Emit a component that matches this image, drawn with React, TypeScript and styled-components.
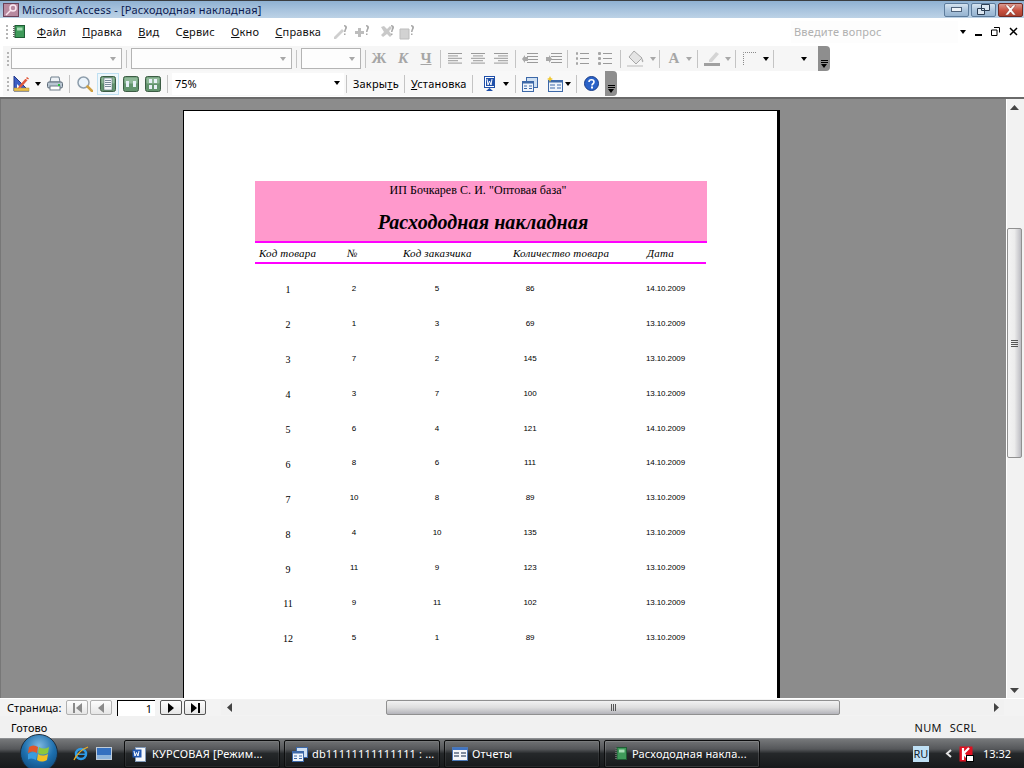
import React from 'react'
import styled, { createGlobalStyle } from 'styled-components';

const GlobalStyle = createGlobalStyle`
  html, body { margin: 0; padding: 0; background: #fff; }
  body { font-family: "Noto Sans", "Liberation Sans", sans-serif; font-size: 11px; color: #000; }
`;

const Screen = styled.div`
  width: 1024px;
  height: 768px;
  overflow: hidden;
  display: flex;
  flex-direction: column;
  background: #fff;
`;

const TitleBar = styled.div`
  height: 18px;
  flex: none;
  display: flex;
  align-items: center;
  padding-left: 3px;
  border-top: 1px solid #3a3d40;
  box-sizing: border-box;
  background: linear-gradient(to bottom, #8fb1d2 0%, #a9c4de 55%, #bcd2e6 100%);
`;

const TitleText = styled.span`
  margin-left: 3px;
  color: #0b1a50;
  font-size: 11px;
  letter-spacing: 0.2px;
  white-space: nowrap;
`;

const WindowButtons = styled.div`
  margin-left: auto;
  margin-right: 1px;
  display: flex;
  gap: 2px;
  height: 14px;
`;

const WindowButton = styled.div<{ $close?: boolean }>`
  width: 25px;
  display: flex;
  align-items: center;
  justify-content: center;
  border: 1px solid ${p => (p.$close ? '#6e2a24' : '#5d7c9c')};
  border-radius: 2px;
  box-sizing: border-box;
  background: ${p => (p.$close
    ? 'linear-gradient(to bottom, #d99a90, #c8503f 55%, #a8402f)'
    : 'linear-gradient(to bottom, #d5e3f0, #a9c3dc 55%, #97b4d0)')};
`;

const MenuBar = styled.div`
  height: 27px;
  flex: none;
  display: flex;
  align-items: center;
  background: #fff;
  padding-left: 6px;
`;

const Grip = styled.div`
  width: 2px;
  height: 14px;
  flex: none;
  background: repeating-linear-gradient(to bottom, #b5b5b5 0 2px, transparent 2px 4px);
`;

const MenuItem = styled.span<{ $ml: number }>`
  margin-left: ${p => p.$ml}px;
  font-size: 11px;
  letter-spacing: 0.2px;
  white-space: nowrap;
  color: #111;
`;

const HelpBox = styled.div`
  width: 167px;
  height: 22px;
  margin-left: auto;
  box-sizing: border-box;
  padding-left: 3px;
  display: flex;
  align-items: center;
  background: #fdfdfd;
  color: #b0b0b0;
  font-size: 11px;
  letter-spacing: 0.2px;
`;

const MdiButtons = styled.div`
  display: flex;
  align-items: center;
  margin-left: 2px;
  margin-right: 6px;
  gap: 9px;
`;

const Toolbar = styled.div<{ $width: number; $bg: string }>`
  width: ${p => p.$width}px;
  height: 25px;
  flex: none;
  display: flex;
  align-items: center;
  box-sizing: border-box;
  padding-left: 4px;
  background: ${p => p.$bg};
  border-radius: 0 4px 4px 0;
  margin: 1px 0 0 3px;
  position: relative;

  & + & {
    margin-top: 0;
  }
`;

const Sep = styled.div<{ $ml: number }>`
  width: 1px;
  height: 18px;
  flex: none;
  background: #c4c4c4;
  margin-left: ${p => p.$ml}px;
`;

const Slot = styled.div<{ $ml: number; $w: number }>`
  margin-left: ${p => p.$ml}px;
  width: ${p => p.$w}px;
  height: 18px;
  flex: none;
  display: flex;
  align-items: center;
  justify-content: center;
`;

const Combo = styled.div<{ $ml: number; $w: number }>`
  margin-left: ${p => p.$ml}px;
  width: ${p => p.$w}px;
  height: 21px;
  flex: none;
  box-sizing: border-box;
  border: 1px solid #b4b4b4;
  background: #fdfdfd;
  display: flex;
  align-items: center;
  justify-content: flex-end;
  padding-right: 5px;
`;

const ZoomCombo = styled.div`
  margin-left: 4px;
  width: 172px;
  height: 22px;
  flex: none;
  box-sizing: border-box;
  background: #fff;
  display: flex;
  align-items: center;
  justify-content: space-between;
  padding: 0 4px 1px 3px;
  font-size: 11px;
`;

const Caret = styled.span<{ $grey?: boolean; $ml?: number }>`
  display: block;
  flex: none;
  margin-left: ${p => p.$ml ?? 0}px;
  width: 0;
  height: 0;
  border-left: 3.5px solid transparent;
  border-right: 3.5px solid transparent;
  border-top: 4px solid ${p => (p.$grey ? '#a8a8a8' : '#000')};
`;

const FormatLetter = styled.span<{ $italic?: boolean; $under?: boolean }>`
  font-family: "Liberation Serif", serif;
  font-weight: 700;
  font-size: 15px;
  color: #a6a6a6;
  font-style: ${p => (p.$italic ? 'italic' : 'normal')};
  text-decoration: ${p => (p.$under ? 'underline' : 'none')};
`;

const ToolText = styled.span<{ $ml: number }>`
  margin-left: ${p => p.$ml}px;
  font-size: 11px;
  white-space: nowrap;
  letter-spacing: 0.2px;
`;

const ActiveTool = styled.div`
  margin-left: 4px;
  width: 22px;
  height: 22px;
  flex: none;
  box-sizing: border-box;
  border: 1px solid #bfe0f2;
  background: #eef7fc;
  display: flex;
  align-items: center;
  justify-content: center;
`;

const Chevron = styled.div`
  position: absolute;
  right: 0;
  top: 0;
  bottom: 0;
  width: 12px;
  background: #8e8e8e;
  border-radius: 0 4px 4px 0;
  display: flex;
  flex-direction: column;
  align-items: center;
  justify-content: flex-end;
  padding-bottom: 3px;
  box-sizing: border-box;
  gap: 1px;
`;

const ChevronBar = styled.div`
  width: 7px;
  height: 1px;
  background: #000;
`;

const Middle = styled.div`
  height: 601px;
  flex: none;
  display: flex;
  margin-top: 1px;
  border-top: 2px solid #6a6a6a;
  box-sizing: border-box;
`;

const Canvas = styled.div`
  flex: 1;
  overflow: hidden;
  background: #8c8c8c;
  padding: 11px 0 0 182px;
  border-left: 1px solid #777;
`;

const Page = styled.div`
  width: 597px;
  height: 700px;
  box-sizing: border-box;
  background: #fff;
  border-top: 1px solid #000;
  border-left: 1px solid #000;
  border-right: 3px solid #000;
  padding: 70px 0 0 71px;
`;

const Report = styled.div`
  width: 452px;
  font-family: "Liberation Serif", serif;
`;

const ReportHeader = styled.div`
  height: 60px;
  background: #ff99cc;
  border-bottom: 2px solid #ff00ff;
  display: flex;
  flex-direction: column;
  align-items: center;
`;

const Company = styled.div`
  margin-top: 1px;
  margin-right: 6px;
  font-size: 12px;
  line-height: 16px;
  letter-spacing: 0.05px;
`;

const ReportTitle = styled.div`
  margin-top: 12px;
  margin-left: 4px;
  font-size: 20px;
  line-height: 24px;
  font-weight: 700;
  font-style: italic;
  letter-spacing: 0.1px;
`;

const ColumnHeads = styled.div`
  height: 19px;
  border-bottom: 2px solid #ff00ff;
  margin-right: 1px;
  display: grid;
  grid-template-columns: 88px 56px 110px 134px 1fr;
  align-items: center;
  padding-left: 4px;
  font-size: 11px;
  font-style: italic;
  letter-spacing: 0.2px;
`;

const Rows = styled.div`
  padding-top: 7px;
`;

const Row = styled.div`
  height: 34.9px;
  display: grid;
  grid-template-columns: 66px 66px 100px 86px 1fr;
  align-items: center;
  justify-items: center;
  font-family: "Liberation Sans", sans-serif;
  font-size: 8px;
  letter-spacing: -0.1px;
  color: #000;
`;

const RowKey = styled.span`
  font-family: "Liberation Serif", serif;
  font-size: 10px;
  margin-top: 3px;
`;

const RowDate = styled.span`
  justify-self: end;
  padding-right: 22px;
`;

const VScroll = styled.div`
  width: 18px;
  flex: none;
  display: flex;
  flex-direction: column;
  box-sizing: border-box;
  background: #f2f2f2;
  border-left: 1px solid #fff;
  padding-right: 2px;
`;

const ArrowCell = styled.div<{ $vertical?: boolean }>`
  flex: none;
  width: ${p => (p.$vertical ? '100%' : '16px')};
  height: ${p => (p.$vertical ? '16px' : '100%')};
  display: flex;
  align-items: center;
  justify-content: center;
`;

const VTrackSpace = styled.div<{ $h: number }>`
  height: ${p => p.$h}px;
  flex: none;
`;

const VThumb = styled.div`
  height: 230px;
  flex: none;
  box-sizing: border-box;
  border: 1px solid #909090;
  border-radius: 2px;
  background: linear-gradient(to right, #f4f4f4, #ececec 50%, #bcbcc2);
  display: flex;
  flex-direction: column;
  align-items: center;
  justify-content: center;
  gap: 1px;
`;

const GripLineH = styled.div`
  width: 7px;
  height: 1px;
  background: #555;
`;

const GripLineV = styled.div`
  width: 1px;
  height: 7px;
  background: #555;
`;

const NavBar = styled.div`
  height: 18px;
  flex: none;
  display: flex;
  align-items: center;
  background: #f3f3f3;
  border-top: 1px solid #fff;
  box-sizing: border-box;
  padding-left: 7px;
`;

const NavLabel = styled.span`
  font-size: 11px;
  width: 59px;
  flex: none;
`;

const NavButton = styled.div<{ $off?: boolean; $ml: number }>`
  width: 22px;
  height: 15px;
  flex: none;
  margin-left: ${p => p.$ml}px;
  box-sizing: border-box;
  border: 1px solid ${p => (p.$off ? '#b0b0b0' : '#555')};
  border-radius: 2px;
  background: linear-gradient(to bottom, #fdfdfd, #e6e6e6);
  display: flex;
  align-items: center;
  justify-content: center;
  gap: 1px;
`;

const NavTriangle = styled.span<{ $off?: boolean; $left?: boolean }>`
  display: block;
  width: 0;
  height: 0;
  border-top: 5px solid transparent;
  border-bottom: 5px solid transparent;
  ${p => (p.$left ? 'border-right' : 'border-left')}: 6px solid ${p => (p.$off ? '#8a8a8a' : '#000')};
`;

const NavStop = styled.span<{ $off?: boolean }>`
  display: block;
  width: 2px;
  height: 10px;
  background: ${p => (p.$off ? '#8a8a8a' : '#000')};
`;

const PageInput = styled.div`
  width: 38px;
  height: 16px;
  flex: none;
  margin-left: 5px;
  box-sizing: border-box;
  border-top: 1px solid #000;
  border-left: 1px solid #000;
  background: #fff;
  text-align: right;
  padding-right: 3px;
  font-size: 11px;
  line-height: 16px;
`;

const HScroll = styled.div`
  margin-left: 15px;
  width: 783px;
  height: 15px;
  flex: none;
  display: flex;
  background: #f1f1f1;
`;

const HThumb = styled.div`
  width: 454px;
  margin-left: 149px;
  flex: none;
  box-sizing: border-box;
  border: 1px solid #909090;
  border-radius: 2px;
  background: linear-gradient(to bottom, #f2f2f2, #dedede 50%, #b4b4ba);
  display: flex;
  align-items: center;
  justify-content: center;
  gap: 1px;
`;

const HSpace = styled.div`
  flex: 1;
`;

const StatusBar = styled.div`
  height: 22px;
  flex: none;
  display: flex;
  align-items: center;
  background: #f1f1f1;
  padding-left: 11px;
  font-size: 11px;
  letter-spacing: 0.1px;
`;

const StatusFlag = styled.span<{ $ml: number }>`
  margin-left: ${p => p.$ml}px;
  color: #111;
  letter-spacing: 0.3px;
`;

const Taskbar = styled.div`
  height: 30px;
  flex: none;
  display: flex;
  align-items: center;
  border-top: 1px solid #8d8f92;
  box-sizing: border-box;
  background: linear-gradient(to bottom, #76787a 0%, #55575a 35%, #25282a 50%, #17191b 100%);
  color: #fff;
  font-size: 11px;
`;

const Orb = styled.div`
  width: 38px;
  height: 38px;
  flex: none;
  margin-left: 20px;
  margin-top: -2px;
  border-radius: 50%;
  box-sizing: border-box;
  border: 1px solid #1c2c3c;
  background: radial-gradient(circle at 50% 30%, #7fb8e0, #1d6fae 50%, #0b3c68 100%);
  display: flex;
  align-items: center;
  justify-content: center;
`;

const QuickLaunch = styled.div`
  display: flex;
  align-items: center;
  margin-left: 15px;
  gap: 7px;
  width: 51px;
  flex: none;
`;

const TaskButton = styled.div<{ $active?: boolean }>`
  width: 156px;
  height: 28px;
  flex: none;
  margin-right: 4px;
  box-sizing: border-box;
  display: flex;
  align-items: center;
  padding-left: 7px;
  gap: 4px;
  border: 1px solid #0c0d0e;
  border-radius: 2px;
  box-shadow: inset 0 0 0 1px rgba(255, 255, 255, ${p => (p.$active ? 0.14 : 0.07)});
  white-space: nowrap;
  overflow: hidden;
  letter-spacing: 0.15px;
`;

const Tray = styled.div`
  margin-left: auto;
  display: flex;
  align-items: center;
  margin-right: 13px;
`;

const LangBadge = styled.span`
  width: 16px;
  height: 16px;
  margin-right: 16px;
  display: flex;
  align-items: center;
  justify-content: center;
  background: #bfe0f5;
  color: #10202c;
  font-size: 11px;
`;

const TrayIcon = styled.span`
  margin-left: 6px;
  display: block;
`;

const Clock = styled.span`
  margin-left: 9px;
`;

const Svg = ({ w = 16, h = 16, children }: { w?: number; h?: number; children: React.ReactNode }) => (
  <svg width={w} height={h} viewBox={`0 0 ${w} ${h}`} style={{ display: 'block', flex: 'none' }}>{children}</svg>
);

const LinesIcon = ({ mode }: { mode: 'left' | 'center' | 'right' }) => {
  const rows = [14, 10, 14, 10, 14];
  return (
    <Svg w={14} h={12}>
      {rows.map((w, i) => (
        <rect key={i} y={i * 2.4} x={mode === 'left' ? 0 : mode === 'center' ? (14 - w) / 2 : 14 - w} width={w} height={1} fill="#9a9a9a" />
      ))}
    </Svg>
  );
};

const IndentIcon = ({ flip }: { flip?: boolean }) => (
  <Svg w={16} h={12}>
    {[0, 3, 6, 9].map(y => <rect key={y} x={5} y={y} width={11} height={1} fill="#9a9a9a" />)}
    <path d={flip ? 'M0 4h3V2l3 4-3 4V8H0z' : 'M0 6l3-4v2h3v4H3v2z'} fill="#a8a8a8" />
  </Svg>
);

const ListIcon = ({ numbered }: { numbered?: boolean }) => (
  <Svg w={14} h={13}>
    {[1, 6, 11].map(y => (
      <React.Fragment key={y}>
        <rect x={5} y={y} width={9} height={1} fill="#9a9a9a" />
        <rect x={numbered ? 1 : 0} y={y - 1} width={numbered ? 2 : 3} height={3} rx={1} fill="#a6a6a6" />
      </React.Fragment>
    ))}
  </Svg>
);

const GhostIcon = ({ kind }: { kind: number }) => (
  <Svg w={16} h={16}>
    {kind === 0 && <path d="M2 13L10 5l2 2-8 8H2z" fill="#cfcfcf" />}
    {kind === 1 && <path d="M1 7h3V4h3v3h3v3H7v3H4v-3H1z" fill="#bdbdbd" />}
    {kind === 2 && <path d="M2 3l3-1 3 3 3-3 2 2-3 3 3 4-2 2-3-3-4 3-2-2 3-3z" fill="#c9c9c9" />}
    {kind === 3 && <path d="M1 5h9v10H1z" fill="#d2d2d2" stroke="#bdbdbd" />}
    <path d="M12 1c2 0 3 1 3 2.500S13.500 6 13.500 8h-1.500C12 6 13.200 5 13.200 3.500 13.200 3 12.800 2.500 12 2.500zM12 9.500h1.500V11H12z" fill="#a8a8a8" />
  </Svg>
);

const RulerIcon = () => (
  <Svg w={17} h={17}>
    <path d="M1 1v15h15z" fill="#3d5fc4" stroke="#23388a" />
    <path d="M4 9v4h4z" fill="#fff" />
    <rect x={1} y={13} width={15} height={3} fill="#e8c050" stroke="#a88a30" strokeWidth={0.5} />
    <path d="M6 11L14 2l2 1.500-8 9-3 1z" fill="#e05a3c" />
    <path d="M12 3l3 2" stroke="#fff" />
  </Svg>
);

const PrinterIcon = () => (
  <Svg w={16} h={15}>
    <path d="M4 1h8l1 5H3z" fill="#eef2f6" stroke="#70808e" />
    <rect x={0.5} y={6} width={15} height={6} rx={1.500} fill="#b9c6d2" stroke="#5d6b78" />
    <rect x={3} y={10} width={10} height={4} fill="#fff" stroke="#6f7c88" />
    <rect x={11} y={8} width={2} height={2} fill="#28c040" />
  </Svg>
);

const LensIcon = () => (
  <Svg w={16} h={16}>
    <circle cx={6.500} cy={6.500} r={5.500} fill="#eaf3fb" stroke="#8d9dab" strokeWidth={1.500} />
    <path d="M10.500 10.500l4.500 4.500" stroke="#d0a040" strokeWidth={2.500} strokeLinecap="round" />
  </Svg>
);

const PageViewIcon = ({ cells }: { cells: 1 | 2 | 4 }) => (
  <Svg w={16} h={16}>
    <rect x={0.5} y={0.5} width={15} height={15} rx={2} fill="#63946e" stroke="#3c5c44" />
    <rect x={1.500} y={1.500} width={13} height={6} rx={1} fill="#8fb898" />
    {cells === 1 && (
      <>
        <rect x={4} y={2} width={8} height={12} fill="#f4f7fa" stroke="#4a5a6a" strokeWidth={0.5} />
        {[4, 6, 8, 10].map(y => <rect key={y} x={5} y={y} width={6} height={1} fill="#7a8a9a" />)}
      </>
    )}
    {cells === 2 && (
      <>
        <rect x={3} y={5} width={3} height={6} fill="#e8f0f8" />
        <rect x={10} y={5} width={3} height={6} fill="#e8f0f8" />
      </>
    )}
    {cells === 4 && (
      <>
        <rect x={4} y={3} width={3} height={4} fill="#e8f0f8" />
        <rect x={9} y={3} width={3} height={4} fill="#e8f0f8" />
        <rect x={4} y={9} width={3} height={4} fill="#e8f0f8" />
        <rect x={9} y={9} width={3} height={4} fill="#e8f0f8" />
      </>
    )}
  </Svg>
);

const WordExportIcon = () => (
  <Svg w={15} h={16}>
    <rect x={2.500} y={0.5} width={10} height={11} fill="#fff" stroke="#1f4fa8" />
    <rect x={4} y={2} width={8} height={8} fill="#1f4fa8" />
    <path d="M5 3l1 6 1.500-4 1.500 4 1-6" stroke="#fff" fill="none" />
    <path d="M4 15l3.500-3 3.500 3z" fill="#1f4fa8" />
  </Svg>
);

const DbWindowIcon = () => (
  <Svg w={16} h={16}>
    <rect x={4.500} y={1.500} width={11} height={10} fill="#cfe0f2" stroke="#3c68a8" />
    <rect x={0.5} y={5.500} width={11} height={10} fill="#eef4fb" stroke="#3c68a8" />
    <rect x={0.5} y={5.500} width={11} height={2} fill="#3c68a8" />
    <path d="M2 10h3M7 10h3M2 12.500h3M7 12.500h3" stroke="#3c68a8" />
  </Svg>
);

const NewObjectIcon = () => (
  <Svg w={16} h={16}>
    <rect x={1.500} y={4.500} width={14} height={11} fill="#eef4fb" stroke="#3c68a8" />
    <rect x={1.500} y={4.500} width={14} height={2} fill="#3c68a8" />
    <path d="M3 9h5M10 9h4M3 12h5M10 12h4" stroke="#3c68a8" />
    <path d="M3 0l1 2 2 1-2 1-1 2-1-2-2-1 2-1z" fill="#f0c830" />
  </Svg>
);

const HelpIcon = () => (
  <Svg w={15} h={15}>
    <circle cx={7.500} cy={7.500} r={7} fill="#2a62c8" stroke="#183c88" />
    <path d="M5 6c0-3 5-3 5 0 0 2-2 1.500-2 3.500" stroke="#fff" strokeWidth={1.600} fill="none" />
    <rect x={7} y={10.500} width={2} height={2} fill="#fff" />
  </Svg>
);

const BookIcon = () => (
  <Svg w={12} h={13}>
    <rect x={2} y={0.5} width={9.500} height={12} fill="#3f9a5a" stroke="#1e5c34" />
    <rect x={4} y={2.500} width={5.500} height={3} fill="#a6dcb4" />
    <path d="M1 1v11" stroke="#666" strokeDasharray="1 1" strokeWidth={2} />
  </Svg>
);

const AccessKeyIcon = () => (
  <Svg w={16} h={14}>
    <rect x={0.5} y={0.5} width={15} height={13} fill="#b88aa0" stroke="#6a4158" />
    <circle cx={10} cy={5} r={3} fill="none" stroke="#fbe8f2" strokeWidth={1.500} />
    <path d="M8 7l-5 5" stroke="#fbe8f2" strokeWidth={1.500} />
  </Svg>
);

const WordTaskIcon = () => (
  <Svg w={16} h={16}>
    <rect x={3.500} y={1.500} width={10} height={14} fill="#f4f7fb" stroke="#8098b8" />
    <rect x={0.5} y={3.500} width={9} height={8} fill="#2358b0" />
    <path d="M2 5l1 5 1.500-3.500L6 10l1-5" stroke="#fff" fill="none" />
  </Svg>
);

const ReportsIcon = () => (
  <Svg w={16} h={14}>
    <rect x={0.5} y={0.5} width={15} height={13} fill="#f4f6f9" stroke="#4c78b8" />
    <rect x={1} y={1} width={14} height={2} fill="#3f74c4" />
    <path d="M2 6h5M9 6h5M2 9h5M9 9h5" stroke="#5a6a80" strokeWidth={1.500} />
  </Svg>
);

const IeIcon = () => (
  <Svg w={16} h={16}>
    <circle cx={8} cy={8} r={5} fill="none" stroke="#2e9be8" strokeWidth={2.500} />
    <rect x={4} y={7.500} width={8} height={1.500} fill="#2e9be8" />
    <path d="M1 14C3 9 9 3 15 1" stroke="#f0b020" strokeWidth={1.300} fill="none" />
  </Svg>
);

const DesktopIcon = () => (
  <Svg w={16} h={13}>
    <rect x={0.5} y={0.5} width={15} height={12} fill="#3470c0" stroke="#c0ccd8" />
    <rect x={1} y={8} width={14} height={4} fill="#8db4dc" />
  </Svg>
);

const WindowsFlag = () => (
  <Svg w={22} h={20}>
    <path d="M1 4c3-2 6-2 9 0l-1 6C6 8 3 8 0 10z" fill="#e2562a" />
    <path d="M11 4c3 2 6 2 10 0l-1 6c-4 2-7 2-10 0z" fill="#8cc83c" />
    <path d="M0 11c3-2 6-2 9 0l-1 6c-3-2-6-2-9 0z" fill="#3a9ce0" />
    <path d="M10 11c3 2 6 2 10 0l-1 6c-4 2-7 2-10 0z" fill="#f4c020" />
  </Svg>
);

const KasperskyIcon = () => (
  <Svg w={15} h={16}>
    <rect x={0.5} y={0.5} width={13} height={15} fill="#e01020" />
    <path d="M4 2v12M4 8l6-6M5 8l6 7" stroke="#fff" strokeWidth={2.200} fill="none" />
    <rect x={7.500} y={9.500} width={7} height={6} fill="#fff" stroke="#000" />
  </Svg>
);

type ReportRow = { key: number; num: number; customer: number; qty: number; date: string };

const rows: ReportRow[] = [
  { key: 1, num: 2, customer: 5, qty: 86, date: '14.10.2009' },
  { key: 2, num: 1, customer: 3, qty: 69, date: '13.10.2009' },
  { key: 3, num: 7, customer: 2, qty: 145, date: '13.10.2009' },
  { key: 4, num: 3, customer: 7, qty: 100, date: '13.10.2009' },
  { key: 5, num: 6, customer: 4, qty: 121, date: '14.10.2009' },
  { key: 6, num: 8, customer: 6, qty: 111, date: '14.10.2009' },
  { key: 7, num: 10, customer: 8, qty: 89, date: '13.10.2009' },
  { key: 8, num: 4, customer: 10, qty: 135, date: '13.10.2009' },
  { key: 9, num: 11, customer: 9, qty: 123, date: '13.10.2009' },
  { key: 11, num: 9, customer: 11, qty: 102, date: '13.10.2009' },
  { key: 12, num: 5, customer: 1, qty: 89, date: '13.10.2009' },
];

export default function App() {
  return (
    <Screen>
      <GlobalStyle />
      <TitleBar>
        <AccessKeyIcon />
        <TitleText>Microsoft Access - [Расхододная накладная]</TitleText>
        <WindowButtons>
          <WindowButton>
            <Svg w={11} h={5}><rect x={0.5} y={0.5} width={10} height={4} fill="#eef3f8" stroke="#50647c" /></Svg>
          </WindowButton>
          <WindowButton>
            <Svg w={13} h={11}><path d="M4.500.5h8v6h-8zM.5 4.500h7v6h-7z" fill="#dbe6f1" stroke="#2c3e54" /></Svg>
          </WindowButton>
          <WindowButton $close>
            <Svg w={13} h={10}><path d="M1 0h3l2.500 3L9 0h3L8 5l4 5H9L6.500 7 4 10H1l4-5z" fill="#fff" stroke="#7a3028" strokeWidth={0.5} /></Svg>
          </WindowButton>
        </WindowButtons>
      </TitleBar>

      <MenuBar>
        <Grip />
        <Slot $ml={4} $w={13}><BookIcon /></Slot>
        <MenuItem $ml={12}><u>Ф</u>айл</MenuItem>
        <MenuItem $ml={16}><u>П</u>равка</MenuItem>
        <MenuItem $ml={16}><u>В</u>ид</MenuItem>
        <MenuItem $ml={16}>С<u>е</u>рвис</MenuItem>
        <MenuItem $ml={16}><u>О</u>кно</MenuItem>
        <MenuItem $ml={16}><u>С</u>правка</MenuItem>
        <Slot $ml={11} $w={16}><GhostIcon kind={0} /></Slot>
        <Slot $ml={6} $w={16}><GhostIcon kind={1} /></Slot>
        <Slot $ml={9} $w={16}><GhostIcon kind={2} /></Slot>
        <Slot $ml={4} $w={16}><GhostIcon kind={3} /></Slot>
        <HelpBox>Введите вопрос</HelpBox>
        <MdiButtons>
          <Caret />
          <Svg w={7} h={8}><rect y={6} width={7} height={2} fill="#000" /></Svg>
          <Svg w={9} h={9}><path d="M3 .5h5.500v5M.5 3h5.500v5.500H.5z" fill="none" stroke="#000" /></Svg>
          <Svg w={9} h={9}><path d="M1 1l7 7M8 1L1 8" stroke="#000" strokeWidth={1.500} /></Svg>
        </MdiButtons>
      </MenuBar>

      <Toolbar $width={827} $bg="#f6f6f6">
        <Grip />
        <Combo $ml={2} $w={111}><Caret $grey /></Combo>
        <Sep $ml={4} />
        <Combo $ml={4} $w={161}><Caret $grey /></Combo>
        <Sep $ml={4} />
        <Combo $ml={4} $w={60}><Caret $grey /></Combo>
        <Sep $ml={4} />
        <Slot $ml={6} $w={14}><FormatLetter>Ж</FormatLetter></Slot>
        <Slot $ml={10} $w={14}><FormatLetter $italic>К</FormatLetter></Slot>
        <Slot $ml={9} $w={14}><FormatLetter $under>Ч</FormatLetter></Slot>
        <Sep $ml={7} />
        <Slot $ml={7} $w={14}><LinesIcon mode="left" /></Slot>
        <Slot $ml={9} $w={14}><LinesIcon mode="center" /></Slot>
        <Slot $ml={9} $w={14}><LinesIcon mode="right" /></Slot>
        <Sep $ml={7} />
        <Slot $ml={6} $w={16}><IndentIcon /></Slot>
        <Slot $ml={8} $w={16}><IndentIcon flip /></Slot>
        <Sep $ml={5} />
        <Slot $ml={7} $w={14}><ListIcon numbered /></Slot>
        <Slot $ml={9} $w={14}><ListIcon /></Slot>
        <Sep $ml={8} />
        <Slot $ml={6} $w={17}>
          <Svg w={17} h={17}>
            <path d="M7 1l8 7-6 6-7-7z" fill="#e4e4e4" stroke="#a8a8a8" />
            <path d="M15 8c1 2 2 3 1 4s-2-2-1-4z" fill="#b0b0b0" />
            <rect y={15} width={16} height={2} fill="#d8d8d8" />
          </Svg>
        </Slot>
        <Caret $grey $ml={6} />
        <Sep $ml={3} />
        <Slot $ml={7} $w={14}><FormatLetter>A</FormatLetter></Slot>
        <Caret $grey $ml={5} />
        <Sep $ml={5} />
        <Slot $ml={6} $w={17}>
          <Svg w={17} h={15}>
            <path d="M5 9l7-8 3 2-7 8H5z" fill="#d4d4d4" />
            <rect y={12} width={16} height={3} fill="#a0a0a0" />
          </Svg>
        </Slot>
        <Caret $grey $ml={4} />
        <Sep $ml={4} />
        <Slot $ml={7} $w={14}>
          <Svg w={14} h={13}><path d="M.5 13V.5H14" fill="none" stroke="#8a8a8a" strokeDasharray="1 1" /></Svg>
        </Slot>
        <Caret $ml={6} />
        <Sep $ml={4} />
        <Caret $ml={27} />
        <Chevron><ChevronBar /><ChevronBar /><Caret /></Chevron>
      </Toolbar>

      <Toolbar $width={614} $bg="#f8f8f8">
        <Grip />
        <Slot $ml={4} $w={17}><RulerIcon /></Slot>
        <Caret $ml={5} />
        <Slot $ml={6} $w={16}><PrinterIcon /></Slot>
        <Sep $ml={6} />
        <Slot $ml={7} $w={16}><LensIcon /></Slot>
        <ActiveTool><PageViewIcon cells={1} /></ActiveTool>
        <Slot $ml={3} $w={17}><PageViewIcon cells={2} /></Slot>
        <Slot $ml={6} $w={16}><PageViewIcon cells={4} /></Slot>
        <Sep $ml={6} />
        <ZoomCombo>75%<Caret /></ZoomCombo>
        <Sep $ml={2} />
        <ToolText $ml={6}>Закры<u>т</u>ь</ToolText>
        <Sep $ml={5} />
        <ToolText $ml={6}><u>У</u>становка</ToolText>
        <Sep $ml={5} />
        <Slot $ml={9} $w={15}><WordExportIcon /></Slot>
        <Caret $ml={6} />
        <Sep $ml={6} />
        <Slot $ml={6} $w={16}><DbWindowIcon /></Slot>
        <Slot $ml={9} $w={16}><NewObjectIcon /></Slot>
        <Caret $ml={2} />
        <Sep $ml={5} />
        <Slot $ml={7} $w={15}><HelpIcon /></Slot>
        <Chevron><ChevronBar /><ChevronBar /><Caret /></Chevron>
      </Toolbar>

      <Middle>
        <Canvas>
          <Page>
            <Report>
              <ReportHeader>
                <Company>ИП Бочкарев С. И. "Оптовая база"</Company>
                <ReportTitle>Расхододная накладная</ReportTitle>
              </ReportHeader>
              <ColumnHeads>
                <span>Код товара</span>
                <span>№</span>
                <span>Код заказчика</span>
                <span>Количество товара</span>
                <span>Дата</span>
              </ColumnHeads>
              <Rows>
                {rows.map(row => (
                  <Row key={row.key}>
                    <RowKey>{row.key}</RowKey>
                    <span>{row.num}</span>
                    <span>{row.customer}</span>
                    <span>{row.qty}</span>
                    <RowDate>{row.date}</RowDate>
                  </Row>
                ))}
              </Rows>
            </Report>
          </Page>
        </Canvas>
        <VScroll>
          <ArrowCell $vertical><Svg w={9} h={5}><path d="M0 5l4.500-5L9 5z" fill="#444" /></Svg></ArrowCell>
          <VTrackSpace $h={113} />
          <VThumb><GripLineH /><GripLineH /><GripLineH /><GripLineH /></VThumb>
          <VTrackSpace $h={224} />
          <ArrowCell $vertical><Svg w={9} h={5}><path d="M0 0l4.500 5L9 0z" fill="#444" /></Svg></ArrowCell>
        </VScroll>
      </Middle>

      <NavBar>
        <NavLabel>Страница:</NavLabel>
        <NavButton $off $ml={0}><NavStop $off /><NavTriangle $off $left /></NavButton>
        <NavButton $off $ml={2}><NavTriangle $off $left /></NavButton>
        <PageInput>1</PageInput>
        <NavButton $ml={5}><NavTriangle /></NavButton>
        <NavButton $ml={2}><NavTriangle /><NavStop /></NavButton>
        <HScroll>
          <ArrowCell><Svg w={5} h={9}><path d="M5 0L0 4.500 5 9z" fill="#444" /></Svg></ArrowCell>
          <HThumb><GripLineV /><GripLineV /><GripLineV /></HThumb>
          <HSpace />
          <ArrowCell><Svg w={5} h={9}><path d="M0 0l5 4.500L0 9z" fill="#444" /></Svg></ArrowCell>
        </HScroll>
      </NavBar>

      <StatusBar>
        Готово
        <StatusFlag $ml={867}>NUM</StatusFlag>
        <StatusFlag $ml={8}>SCRL</StatusFlag>
      </StatusBar>

      <Taskbar>
        <Orb><WindowsFlag /></Orb>
        <QuickLaunch><IeIcon /><DesktopIcon /></QuickLaunch>
        <TaskButton><WordTaskIcon />КУРСОВАЯ [Режим...</TaskButton>
        <TaskButton><DbWindowIcon />db11111111111111 : ...</TaskButton>
        <TaskButton><ReportsIcon />Отчеты</TaskButton>
        <TaskButton $active><Slot $ml={2} $w={14}><BookIcon /></Slot>Расхододная накла...</TaskButton>
        <Tray>
          <LangBadge>RU</LangBadge>
          <Svg w={8} h={9}>
            <path d="M6 1L2 4.500 6 8" fill="none" stroke="#e4e4e4" strokeWidth={2} />
          </Svg>
          <TrayIcon><KasperskyIcon /></TrayIcon>
          <Clock>13:32</Clock>
        </Tray>
      </Taskbar>
    </Screen>
  )
}
